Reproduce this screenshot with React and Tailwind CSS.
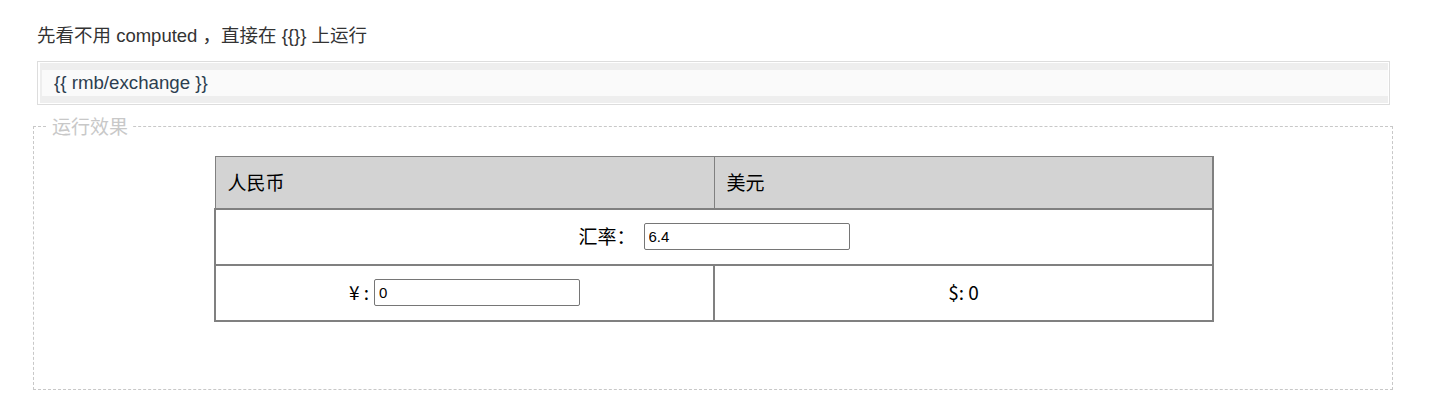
import React from "react";

export default function App() {
  const [rate, setRate] = React.useState("6.4");
  const [rmb, setRmb] = React.useState("0");
  const usd = Number(rmb) / Number(rate) || 0;

  return (
    <div className="w-[1450px] h-[404px] bg-white font-['Liberation_Sans','Noto_Sans_CJK_SC',sans-serif] text-[#333]">
      <div className="pl-[37px] pr-[60px] pt-[23px]">
        <p className="text-[18.5px] leading-[26px]">先看不用 computed ，直接在 {"{{}}"} 上运行</p>

        {/* code block */}
        <div className="mt-[12px] border border-[#ddd] p-[1px] pl-[2px]">
          <div className="border-y-[7px] border-l-[2px] border-[#eee] bg-[#fafafa] h-[40px] pl-[12px] flex items-center">
            <span className="text-[18.7px] text-[#2c3e50]">{"{{ rmb/exchange }}"}</span>
          </div>
        </div>
      </div>

      {/* result */}
      <fieldset className="mx-[33px] mt-[12px] w-[1360px] h-[273px] border border-dashed border-[#c8c8c8] px-[12px] pt-[21px]">
        <legend className="ml-[1px] px-[5px] text-[19px] leading-[18px] text-[#c8c8c8] font-['Noto_Sans_CJK_SC',sans-serif]">运行效果</legend>

        <table className="ml-[168px] w-[1000px] border-collapse border-t border-l border-b-2 border-r-2 border-[#808080] font-['Noto_Sans_CJK_SC',sans-serif] text-[19px] text-black">
          <thead>
            <tr className="bg-[#d3d3d3] h-[52px]">
              <th className="w-1/2 border border-[#808080] text-left font-normal pl-[12px]">人民币</th>
              <th className="w-1/2 border border-[#808080] text-left font-normal pl-[12px]">美元</th>
            </tr>
          </thead>
          <tbody>
            <tr className="h-[56px]">
              <td colSpan={2} className="border-2 border-[#808080] text-center">
                <span className="inline-flex items-center">
                  汇率：
                  <input
                    value={rate}
                    onChange={(e) => setRate(e.target.value)}
                    className="ml-[8px] w-[206px] h-[27px] border border-[#767676] rounded-[2px] px-[4px] text-[15px] font-['Liberation_Sans',sans-serif] outline-none"
                  />
                </span>
              </td>
            </tr>
            <tr className="h-[56px]">
              <td className="border-2 border-[#808080] text-center">
                <span className="inline-flex items-center">
                  ¥ :
                  <input
                    value={rmb}
                    onChange={(e) => setRmb(e.target.value)}
                    className="ml-[5px] w-[206px] h-[27px] border border-[#767676] rounded-[2px] px-[4px] text-[15px] font-['Liberation_Sans',sans-serif] outline-none"
                  />
                </span>
              </td>
              <td className="border-2 border-[#808080] text-center">$: {usd}</td>
            </tr>
          </tbody>
        </table>
      </fieldset>
    </div>
  );
}
